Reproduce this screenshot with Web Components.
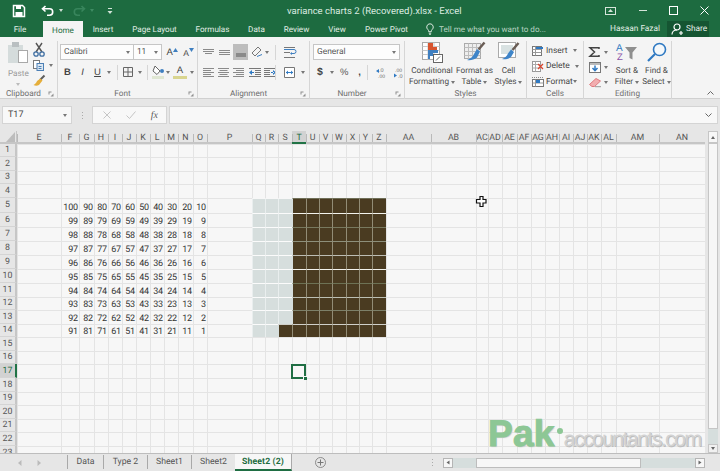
<!DOCTYPE html>
<html><head><meta charset="utf-8"><title>Excel</title>
<style>
html,body{margin:0;padding:0;background:#e6e6e6}
body{font-family:Roboto,"Liberation Sans",sans-serif;font-size:8.6px;color:#444;text-rendering:geometricPrecision}
</style></head>
<body>
<xl-app>
  <xl-titlebar slot="top"></xl-titlebar>
  <xl-ribbon slot="top"></xl-ribbon>
  <xl-formula slot="top"></xl-formula>
  <xl-main></xl-main>
  <xl-bottom></xl-bottom>
</xl-app>
<script>
const bar=(x,y,w,h,f)=>`<rect x="${x}" y="${y}" width="${w}" height="${h}" fill="${f}"/>`;
const lines=(arr,c='#8a8a8a')=>arr.map(([x,y,w])=>bar(x,y,w,1,c)).join('');
const ICONS={
 save:[14,14,`<path d="M1.5 1.5h9l2 2v9h-11z" fill="none" stroke="#fff" stroke-width="1.5"/>${bar(4,2,5,3,'#fff')}${bar(3.5,8,7,4,'#fff')}`],
 undo:[14,11,`<path d="M4.5 1 1.5 3.8 4.5 6.5M2 3.8h6.5a3.2 3.2 0 0 1 0 6.4H6" fill="none" stroke="#fff" stroke-width="1.6"/>`],
 redo:[14,11,`<path d="M9.5 1 12.5 3.8 9.5 6.5M12 3.8H5.5a3.2 3.2 0 0 0 0 6.4H8" fill="none" stroke="#3f8c63" stroke-width="1.6"/>`],
 cust:[6,8,`${bar(1,1,4,1,'#d5e5da')}<path d="M0.5 4h5L3 7z" fill="#d5e5da"/>`],
 ropt:[11,8,`<rect x=".5" y=".5" width="10" height="7" fill="none" stroke="#d5e5da"/><path d="M5.5 2 8 5H3z" fill="#d5e5da"/>`],
 min:[8,2,`${bar(0,0,8,1,'#d5e5da')}`],
 max:[9,9,`<rect x=".5" y=".5" width="8" height="8" fill="none" stroke="#fff"/>`],
 close:[9,9,`<path d="M.5.5l8 8M8.5.5l-8 8" stroke="#fff" fill="none"/>`],
 bulb:[8,12,`<path d="M4 .8a3.3 3.3 0 0 0-2 5.9c.6.6.7 1.2.7 2h2.6c0-.8.1-1.4.7-2A3.3 3.3 0 0 0 4 .8zM2.8 10.2h2.4M3.2 11.4h1.6" fill="none" stroke="#d9e8de"/>`],
 person:[12,12,`<circle cx="6" cy="4" r="3" fill="none" stroke="#fff" stroke-width="1.2"/><path d="M1 11.5c0-3 2-4.5 5-4.5M8 10h4M10 8v4" fill="none" stroke="#fff" stroke-width="1.2"/>`],
 paste:[21,21,`${bar(0,3,15,18,'#d5dcdc')}${bar(4,0,7,5,'#b9bfc1')}<rect x="10.5" y="8.5" width="9" height="12" fill="#fff" stroke="#a8a8a8"/>`],
 scis:[12,14,`<path d="M3 0l6 9M9 0L3 9" stroke="#555" stroke-width="1.4" fill="none"/><circle cx="3" cy="11" r="2.2" fill="none" stroke="#3f6fa3" stroke-width="1.3"/><circle cx="9" cy="11" r="2.2" fill="none" stroke="#3f6fa3" stroke-width="1.3"/>`],
 copy:[11,11,`<rect x=".5" y=".5" width="6" height="8" fill="#fff" stroke="#7a7a7a"/><rect x="4" y="3.5" width="6.5" height="7" fill="#dbe7f2" stroke="#4b7fb5"/>${bar(5.5,6,3,1,'#4b7fb5')}${bar(5.5,8,3,1,'#4b7fb5')}`],
 brush:[12,11,`<path d="M11.5.5 7 5" stroke="#5c5c5c" stroke-width="2"/><path d="M7.5 3.5l2 2-3.5 4.5c-1.7 1-3.8 1-5.5 0 1.7-.6 3-2.5 3.5-4z" fill="#e5ae3a"/>`],
 launch:[6,6,`<path d="M.5.5h3v1h-2v2h-1zM5.5 5.5H2.5L5.5 2.5z" fill="#8f8f8f"/>`],
 grow:[5,4,`<path d="M2.5 0 5 4H0z" fill="#3f7fc0"/>`],
 shrink:[5,4,`<path d="M2.5 4 5 0H0z" fill="#3f7fc0"/>`],
 borders:[10,10,`<path d="M.5.5h9v9h-9zM5 .5v9M.5 5h9" fill="none" stroke="#666"/>`],
 fill:[13,14,`<path d="M3 1l5 5-3 3.5L1 6z" fill="#fff" stroke="#666"/><circle cx="10" cy="6" r="2" fill="#3f7fc0"/>${bar(0,11,12,3,'#dfe6d2')}`],
 atop:[12,7,lines([[0,0,11],[0,2,11],[2,4,7]])],
 amid:[12,7,lines([[0,1,11],[0,3,11],[0,5,11]])],
 orient:[12,12,`<path d="M1 7l6-6 3 3-6 6z" fill="none" stroke="#777"/><path d="M6 10.5l5-2" stroke="#3f7fc0"/>`],
 wrap:[12,11,`${lines([[0,0,11],[0,5,6],[0,10,11]],'#777')}<path d="M0 2.5h10a1.5 1.5 0 0 1 0 4H7" fill="none" stroke="#3f7fc0"/><path d="M8 5v3L6 6.500z" fill="#3f7fc0"/>`],
 al:[11,9,lines([[0,0,11],[0,2,8],[0,4,11],[0,6,8],[0,8,11]])],
 ac:[11,9,lines([[0,0,11],[1.500,2,8],[0,4,11],[1.500,6,8],[0,8,11]])],
 ar:[11,9,lines([[0,0,11],[3,2,8],[0,4,11],[3,6,8],[0,8,11]])],
 indl:[12,9,`${lines([[0,0,12],[6,2,6],[6,4,6],[6,6,6],[0,8,12]],'#777')}<path d="M0 4.500l3-2.500v5zM2 4h3v1H2z" fill="#2f79c2"/>`],
 indr:[12,9,`${lines([[0,0,12],[0,2,6],[0,4,6],[0,6,6],[0,8,12]],'#777')}<path d="M12 4.500l-3-2.500v5zM7 4h3v1H7z" fill="#2f79c2"/>`],
 merge:[11,11,`<path d="M.5.5h10v10H.5z" fill="#fff" stroke="#777"/><path d="M2 5.500h7" stroke="#2f79c2"/><path d="M2 5.500l2-2v4zM9 5.500l-2-2v4z" fill="#2f79c2"/>`],
 inc:[11,11,`<text x="3" y="5" font-size="5.500" fill="#666" font-family="Liberation Sans">.0</text><text x="2" y="10.500" font-size="5" fill="#666" font-family="Liberation Sans">.00</text><path d="M0 4l3-2v4z" fill="#2f79c2"/>`],
 dec:[11,11,`<text x="2" y="5" font-size="5" fill="#666" font-family="Liberation Sans">.00</text><text x="5" y="10.500" font-size="5.500" fill="#666" font-family="Liberation Sans">.0</text><path d="M4 8.500l-3-2v4z" fill="#2f79c2"/>`],
 cond:[21,21,`<rect x=".5" y=".5" width="17" height="17" fill="#fff" stroke="#a9a9a9"/><path d="M6 .5v17M12 .5v17M.5 4.500h17M.5 8.500h17M.5 12.500h17" stroke="#c9c9c9"/>${bar(6,1,5,4,'#d8552f')}${bar(6,5,9,3,'#d8552f')}${bar(6,8,10,3,'#3f7fc0')}${bar(6,11,5,3,'#3f7fc0')}${bar(6,14,2,3,'#3f7fc0')}<rect x="11.500" y="12.500" width="9" height="8" fill="#fff" stroke="#666"/><path d="M14 18.500l4-4" stroke="#666"/>`],
 table:[21,20,`<rect x=".5" y="1.500" width="16" height="15" fill="#eee" stroke="#aaa"/><path d="M4.500 1.500v15M8.500 1.500v15M12.500 1.500v15M.5 5.500h16M.5 9.500h16M.5 13.500h16" stroke="#bdbdbd"/><path d="M20.500.5l-6 7" stroke="#6a5d55" stroke-width="2.500"/><path d="M13 7l3 2.500-3 6c-3 2.500-7 3-10 2.500 3-1 6-3 7-6z" fill="#3f85c9"/>`],
 cstyle:[21,20,`<rect x=".5" y=".5" width="17" height="15" fill="#fff" stroke="#aaa"/><rect x="3" y="3" width="12" height="9" fill="#d9e2e2"/><path d="M20.500 1l-6 7" stroke="#6a5d55" stroke-width="2.500"/><path d="M13 7.500l3 2.500-3 5c-2.500 2-6 2.500-9 2 3-1 5-3 6-5.500z" fill="#3f85c9"/>`],
 cins:[12,10,`<rect x=".5" y=".5" width="9" height="9" fill="#fff" stroke="#777"/><path d="M.5 3.500h9M.5 6.500h9M3.500.5v9" stroke="#999"/>${bar(4,1,7,2,'#2f79c2')}`],
 cdel:[12,11,`<rect x=".5" y=".5" width="8" height="10" fill="#fff" stroke="#999"/><path d="M.5 3.500h8M.5 7h8M3.500.5v10" stroke="#aaa"/><path d="M6 3l5 5M11 3l-5 5" stroke="#d8452f" stroke-width="1.300"/>`],
 cfmt:[12,10,`<path d="M0 .5h12" stroke="#888" stroke-dasharray="1 1"/><rect x=".5" y="2.500" width="11" height="7" fill="#fff" stroke="#777"/><path d="M3.500 2.500v7M.5 6h11" stroke="#999"/>${bar(4,3,4,3,'#2f79c2')}`],
 sum:[11,10,`<path d="M10 2V.8H1l4.500 4.200L1 9.200h9V8" fill="none" stroke="#444" stroke-width="1.500"/>`],
 fdown:[12,11,`<rect x=".5" y=".5" width="11" height="10" fill="#fff" stroke="#777"/>${bar(1,1,10,2,'#bbb')}<path d="M6 3.500v5M3.500 6 6 8.700 8.500 6" fill="none" stroke="#2f79c2" stroke-width="1.500"/>`],
 eraser:[12,9,`<path d="M7 .5l4.500 2.500-6 5.500H3L.5 6.500z" fill="#f2aeb0" stroke="#e07b80"/><path d="M6 8.700h6" stroke="#999"/>`],
 sort:[22,20,`<text x="0" y="8.500" font-size="10" fill="#2f79c2" font-family="Liberation Sans">A</text><text x="1" y="18" font-size="9.500" fill="#8a52a8" font-family="Liberation Sans">Z</text><path d="M9 5h12l-4.500 5.500v7l-3-1.500v-5.500z" fill="#8f8f8f"/>`],
 find:[20,20,`<circle cx="12.500" cy="7.500" r="6" fill="#f4f8fb" stroke="#2f79c2" stroke-width="1.600"/><path d="M8 12l-7 7" stroke="#2f79c2" stroke-width="2.200"/>`],
 cancel:[8,8,`<path d="M.5.5l7 7M7.500.5l-7 7" stroke="#c5c5c5" fill="none"/>`],
 check:[10,8,`<path d="M.5 4.500l3 3L9.500.5" stroke="#c5c5c5" fill="none"/>`],
 collapse:[7,4,`<path d="M.5 3.500l3-3 3 3" stroke="#666" fill="none"/>`],
 corner:[9,10,`<path d="M9 0v10H0z" fill="#bdbdbd"/>`],
 plus:[11,11,`<circle cx="5.500" cy="5.500" r="5" fill="none" stroke="#8b8b8b"/><path d="M5.500 2.500v6M2.500 5.500h6" stroke="#777"/>`],
 tl:[4,6,`<path d="M3.500 0v6L0 3z" fill="#bbb"/>`],
 tr:[4,6,`<path d="M.5 0v6L4 3z" fill="#bbb"/>`],
 ptr:[11,11,`<path d="M4 .5h3v3h3v3.500H7v3.500H4V7H.5V3.500H4z" fill="#fff" stroke="#111" stroke-width="1.200"/>`]
};
class XlIcon extends HTMLElement{
 constructor(){super();this.attachShadow({mode:'open'});}
 connectedCallback(){
  const [w,h,s]=ICONS[this.getAttribute('n')];
  this.shadowRoot.innerHTML=`<style>:host{display:inline-flex;flex:none;width:${w}px;height:${h}px}svg{display:block;overflow:visible}</style><svg width="${w}" height="${h}" viewBox="0 0 ${w} ${h}" xmlns="http://www.w3.org/2000/svg">${s}</svg>`;
 }
}
customElements.define('xl-icon',XlIcon);
class XlCaret extends HTMLElement{
 constructor(){super();const r=this.attachShadow({mode:'open'});
  r.innerHTML=`<style>:host{display:inline-block;flex:none;width:0;height:0;border-left:2.500px solid transparent;border-right:2.500px solid transparent;border-top:3px solid var(--caret,#777)}</style>`;}
}
customElements.define('xl-caret',XlCaret);

class XlApp extends HTMLElement{
 constructor(){super();this.attachShadow({mode:'open'}).innerHTML=`<style>
 :host{display:flex;flex-direction:column;width:720px;height:471px;overflow:hidden;background:#e6e6e6}
 </style><slot name="top"></slot><slot></slot>`;}
}
customElements.define('xl-app',XlApp);

class XlTitlebar extends HTMLElement{
 constructor(){super();this.attachShadow({mode:'open'}).innerHTML=`<style>
 :host{display:block;height:37px;background:#1d6b40;color:#fff;font:8.100px Roboto,sans-serif}
 .r1{display:grid;grid-template-columns:287px 144px minmax(0,1fr);height:21px;align-items:center}
 .l{display:flex;align-items:center;padding-left:12px;--caret:#cfe0d5}
 .title{color:#dcebe1;font-size:9.500px;padding-top:1px;white-space:nowrap}
 .w{display:flex;align-items:center;justify-content:flex-end}
 .w span{display:flex;width:30px;justify-content:center}
 .r2{display:flex;height:16px;align-items:stretch}
 .t{display:flex;align-items:center;justify-content:center;color:#e3efe7}
 .t.a{background:#f4f4f4;color:#1d6b40;margin-left:3px;width:40px;padding-top:1px}
 .tell{display:flex;align-items:center;gap:5px;color:#b9d4c3;padding-left:8px;flex:1}
 .u{display:flex;align-items:center;color:#e3efe7;margin-right:7px;font-size:8.300px}
 .sh{display:flex;align-items:center;width:42px;margin-right:11px;background:#155532;gap:3px;padding-left:4px;box-sizing:border-box;color:#e9f2ec;font-size:8.300px}
 </style>
 <div class="r1">
  <div class="l"><xl-icon n="save"></xl-icon><xl-icon n="undo" style="margin-left:15px"></xl-icon><xl-caret style="margin-left:4px"></xl-caret>
   <xl-icon n="redo" style="margin-left:9px;opacity:.8"></xl-icon><xl-caret style="margin-left:4px;--caret:#3f8c63"></xl-caret><xl-icon n="cust" style="margin-left:13px"></xl-icon></div>
  <div class="title">variance charts 2 (Recovered).xlsx - Excel</div>
  <div class="w"><span style="width:36px"><xl-icon n="ropt"></xl-icon></span><span><xl-icon n="min"></xl-icon></span><span><xl-icon n="max"></xl-icon></span><span style="width:32px"><xl-icon n="close"></xl-icon></span></div>
 </div>
 <div class="r2">
  <div class="t" style="width:40px">File</div><div class="t a">Home</div>
  <div class="t" style="width:40px">Insert</div><div class="t" style="width:63px">Page Layout</div>
  <div class="t" style="width:53px">Formulas</div><div class="t" style="width:35px">Data</div>
  <div class="t" style="width:45px">Review</div><div class="t" style="width:36px">View</div>
  <div class="t" style="width:63px">Power Pivot</div>
  <div class="tell"><xl-icon n="bulb"></xl-icon>Tell me what you want to do...</div>
  <div class="u">Hasaan Fazal</div>
  <div class="sh"><xl-icon n="person"></xl-icon>Share</div>
 </div>`;}
}
customElements.define('xl-titlebar',XlTitlebar);

class XlGroup extends HTMLElement{
 constructor(){super();this.attachShadow({mode:'open'});}
 connectedCallback(){
  const l=this.getAttribute('label'),ln=this.hasAttribute('launch');
  this.shadowRoot.innerHTML=`<style>
  :host{display:flex;flex-direction:column;flex:none;box-sizing:border-box;height:58px;border-right:1px solid #d6d6d6}
  .b{flex:1;min-height:0}
  .f{display:grid;grid-template-columns:1fr auto 1fr;height:11px;align-items:center;color:#6d6d6d;font-size:8.200px;${ln?'padding-right:10px;':''}}
  .f i{grid-column:3;justify-self:end;display:flex;margin-right:-7px}
  .f span{grid-column:2;grid-row:1}
  </style><div class="b"><slot></slot></div><div class="f"><span>${l}</span>${ln?'<i><xl-icon n="launch"></xl-icon></i>':''}</div>`;
 }
}
customElements.define('xl-group',XlGroup);

const ic=(n,st='')=>`<xl-icon n="${n}" style="${st}"></xl-icon>`;
const car=(st='')=>`<xl-caret style="${st}"></xl-caret>`;
const big=(w,icon,t1,t2)=>`<div class="big" style="width:${w}px"><div class="bi">${ic(icon)}</div><div>${t1}</div><div class="c">${t2}${car('margin-left:2px')}</div></div>`;
class XlRibbon extends HTMLElement{
 constructor(){super();this.attachShadow({mode:'open'}).innerHTML=`<style>
 :host{display:flex;box-sizing:border-box;height:62px;padding-top:4px;background:#f4f4f4;border-bottom:1px solid #d0d0d0;color:#444;font:8.200px Roboto,sans-serif;position:relative}
 .r{display:flex;align-items:center;height:16px}
 .sel{display:flex;align-items:center;box-sizing:border-box;height:16px;background:#fdfdfd;border:1px solid #c6c6c6;font-size:8.400px;padding:0 3px;justify-content:space-between;color:#555}
 .sep{width:1px;height:15px;background:#d6d6d6;flex:none}
 .k{display:flex;align-items:center;justify-content:center;flex:none}
 .big{display:flex;flex-direction:column;align-items:center;flex:none;line-height:11px;color:#4a4a4a;white-space:nowrap}
 .bi{height:24px;display:flex;align-items:flex-start}
 .c{display:flex;align-items:center}
 .col{display:flex}
 b,em,u{font-family:"Liberation Sans",sans-serif;font-size:9.500px;color:#444}
 .A{font:9.500px "Liberation Sans",sans-serif;display:flex;align-items:flex-start;gap:0}
 .cellrow{display:flex;align-items:center;height:15.500px;font-size:8.400px;padding-left:5px}
 .coll{position:absolute;right:6px;bottom:3px;display:flex}
 </style>
 <xl-group label="Clipboard" launch style="width:58px">
  <div class="col" style="padding-left:8px">
   <div style="width:26px;color:#999;margin-top:1px">${ic('paste')}<div style="margin-top:3px;line-height:10px;">Paste</div><div style="padding-left:8px;--caret:#bbb">${car()}</div></div>
   <div style="padding-top:1px"><div class="k" style="height:16px;width:12px;margin-left:-1px">${ic('scis')}</div><div class="r" style="height:15px;margin-left:-1px">${ic('copy')}${car('margin-left:5px')}</div><div class="k" style="height:15px;width:12px;margin-left:-1px">${ic('brush')}</div></div>
  </div>
 </xl-group>
 <xl-group label="Font" launch style="width:140px">
  <div style="padding:3px 0 0 2px">
   <div class="r"><div class="sel" style="width:75px">Calibri${car()}</div><div class="sel" style="width:29px;margin-left:-1px">11${car()}</div>
    <div class="A" style="margin-left:5px;width:17px">A${ic('grow','margin-top:1px')}</div><div class="A" style="width:14px;font-size:8.500px;padding-top:1px">A${ic('shrink')}</div></div>
   <div class="r" style="margin-top:4px">
    <div class="k" style="width:15px;margin-left:0"><b>B</b></div><div class="k" style="width:15px"><em>I</em></div><div class="k" style="width:15px"><u>U</u></div>${car('margin-left:2px')}
    <div class="sep" style="margin-left:6px"></div><div class="k" style="width:20px">${ic('borders')}</div>${car()}
    <div class="sep" style="margin-left:5px"></div>${ic('fill','margin-left:4px')}${car('margin-left:1px')}
    <div class="k" style="width:14px;margin-left:3px;display:block;text-align:center;font-size:9.500px;line-height:10px;font-family:'Liberation Sans';border-bottom:3px solid #d9d58f">A</div>${car('margin-left:3px')}
   </div>
  </div>
 </xl-group>
 <xl-group label="Alignment" launch style="width:112px">
  <div style="padding:3px 0 0 5px">
   <div class="r">${ic('atop')}${ic('amid','margin-left:4px')}<div class="k" style="width:15px;height:16px;background:#bdbdbd;margin-left:2px;align-items:flex-end;padding-bottom:3px;box-sizing:border-box"><div style="width:10px;height:4px;background:#8a8a8a"></div></div>${ic('orient','margin-left:3px')}${car('margin-left:2px')}<div class="sep" style="margin-left:6px"></div>${ic('wrap','margin-left:8px')}</div>
   <div class="r" style="margin-top:4px">${ic('al')}${ic('ac','margin-left:4px')}${ic('ar','margin-left:4px')}${ic('indl','margin-left:5px')}${ic('indr','margin-left:3px')}<div class="sep" style="margin-left:-1px"></div>${ic('merge','margin-left:8px')}${car('margin-left:6px')}</div>
  </div>
 </xl-group>
 <xl-group label="Number" launch style="width:95px">
  <div style="padding:3px 0 0 3px">
   <div class="r"><div class="sel" style="width:87px;justify-content:space-between">General${car()}</div></div>
   <div class="r" style="margin-top:4px;padding-left:4px;font-family:'Liberation Sans';font-size:10px;color:#555"><b style="font-size:10.500px;width:9px">$</b>${car('margin-left:5px')}<span style="margin-left:6px;font-size:9.500px;width:14px">%</span><b style="margin-left:6px;width:10px">,</b><div class="sep" style="margin-right:8px"></div>${ic('inc')}${ic('dec','margin-left:6px')}</div>
  </div>
 </xl-group>
 <xl-group label="Styles" style="width:122px">
  <div class="col" style="padding-left:3px;padding-top:1px">${big(48,'cond','Conditional','Formatting')}${big(37,'table','Format as','Table')}${big(31,'cstyle','Cell','Styles')}</div>
 </xl-group>
 <xl-group label="Cells" style="width:57px">
  <div style="padding-top:2px">
   <div class="cellrow">${ic('cins')}<span style="margin-left:2px;width:27px">Insert</span>${car()}</div>
   <div class="cellrow">${ic('cdel')}<span style="margin-left:2px;width:27px">Delete</span>${car('margin-left:2px')}</div>
   <div class="cellrow">${ic('cfmt')}<span style="margin-left:2px;width:27px">Format</span>${car()}</div>
  </div>
 </xl-group>
 <xl-group label="Editing" style="width:88px">
  <div class="col">
   <div style="padding:3px 0 0 5px;width:24px;--caret:#777"><div class="r" style="height:16px">${ic('sum')}${car('margin-left:4px')}</div><div class="r" style="height:15px">${ic('fdown')}${car('margin-left:3px')}</div><div class="r" style="height:15px">${ic('eraser')}${car('margin-left:3px')}</div></div>
   <div class="col" style="padding-top:1px;margin-left:-1px">${big(30,'sort','Sort &amp;','Filter')}${big(29,'find','Find &amp;','Select')}</div>
  </div>
 </xl-group>
 <div class="coll">${ic('collapse')}</div>`;}
}
customElements.define('xl-ribbon',XlRibbon);

class XlFormula extends HTMLElement{
 constructor(){super();this.attachShadow({mode:'open'}).innerHTML=`<style>
 :host{display:flex;box-sizing:border-box;height:32px;padding:7px 2px 7px 2px;background:#e6e6e6;font:9px Roboto,sans-serif;color:#444;--caret:#777}
 .b{display:flex;align-items:center;box-sizing:border-box;background:#f8f8f8;border:1px solid #d4d4d4;height:18px}
 .n{width:70px;justify-content:space-between;padding:0 4px 0 5px}
 .d{width:20px;display:flex;flex-direction:column;gap:2px;align-items:center;justify-content:center}
 .d i{width:1px;height:1px;background:#aaa}
 .m{width:75px;justify-content:space-between;padding:0 8px 0 10px}
 .m em{font:italic 10px "Liberation Serif",serif;color:#555}
 .x{flex:1;margin-left:2px;justify-content:flex-end;padding-right:5px}
 </style>
 <div class="b n">T17<xl-caret></xl-caret></div><div class="d"><i></i><i></i><i></i></div>
 <div class="b m"><xl-icon n="cancel"></xl-icon><xl-icon n="check"></xl-icon><em>fx</em></div>
 <div class="b x"><xl-icon n="collapse" style="transform:rotate(180deg)"></xl-icon></div>`;}
}
customElements.define('xl-formula',XlFormula);

const EDGES=[0,17,61,79,94,108,122,136,150,164,178,193,207,252,265,278,292,306,319,332,346,359,372,386,431,476,488,502,517,531,545,559,573,587,601,616,659,705];
const YEDGES=[144,157,171,184,198,213,227,241,255,269,283,297,310,324,337,351,364,378,392,405,419,432,446,460];
const COLS=[..."EFGHIJKLMNOPQRSTUVWXYZ",...'AA AB AC AD AE AF AG AH AI AJ AK AL AM AN'.split(' ')];
const HLINE={6:'#f4f4ee',7:'#78795f',8:'#8d8f7b',9:'#bdbdb4',10:'#f2f2ec',11:'#6d7255',12:'#bcbfb4',13:'#7d8069',14:'#d0d0ca'};
class XlSheet extends HTMLElement{
 constructor(){super();
  const cw=EDGES.slice(1).map((e,i)=>(e-EDGES[i])+'px').join(' ');
  const rh=YEDGES.slice(1).map((e,i)=>(e-YEDGES[i])+'px').join(' ');
  let h=`<div class="hc corner"><xl-icon n="corner"></xl-icon></div>`;
  COLS.forEach(c=>h+=`<div class="hc col${c==='T'?' on':''}">${c}</div>`);
  for(let r=1;r<=23;r++){
   h+=`<div class="hc row${r===17?' on':''}">${r}</div>`;
   COLS.forEach((c,i)=>{
    let cls='c',txt='',st='';
    const n=c.length===1?c.charCodeAt(0)-69:-1; // E=0
    if(r>=5&&r<=14){
     if(n>=1&&n<=10){txt=(11-n)*10-(r-5);}
     const dark=(n>=15&&n<=21)||(n===14&&r===14);
     const light=!dark&&n>=12&&n<=14;
     if(dark){cls+=' dk';st=`border-top-color:${r===5?'#6f6f58':HLINE[r]}`;if(n===14)st+=';border-left-color:#d6dedd';if(n===15&&r<14)st+=';border-left-color:#d6dedd';}
     if(light){cls+=' lt';st=r===5?'border-top-color:#f7f7f7':'';}
    }
    h+=`<div class="${cls}" style="${st}">${txt}</div>`;
   });
  }
  this.attachShadow({mode:'open'}).innerHTML=`<style>
  :host{display:block;position:relative;width:705px;height:322px;overflow:hidden;background:#f7f7f7;flex:none}
  .g{display:grid;grid-template-columns:${cw};grid-template-rows:13px ${rh};font:9px Roboto,"Liberation Sans",sans-serif;color:#333}
  .hc{display:flex;align-items:center;justify-content:center;background:#e6e6e6;color:#555;box-sizing:border-box;font-size:8.800px;overflow:hidden;white-space:nowrap}
  .corner{justify-content:flex-end;padding-right:1px;border-bottom:2px solid #c6c6c6;border-right:1px solid #c6c6c6;align-items:flex-end}
  .col{box-shadow:inset 0 -2px #c6c6c6;position:relative}
  .col::before{content:"";position:absolute;left:0;top:3px;bottom:2px;width:1px;background:#b9b9b9}
  .row{border-right:2px solid #c6c6c6;border-bottom:1px solid #d4d4d4}
  .on{background:#d2d2d2;color:#1d6b40}
  .col.on{box-shadow:inset 0 -2px #217346}
  .row.on{border-right-color:#217346}
  .c{box-sizing:border-box;display:flex;align-items:flex-end;justify-content:flex-end;border-left:1px solid #e4e4e4;border-top:1px solid #e4e4e4;line-height:10px;padding-right:1px;letter-spacing:-.15px;overflow:hidden;white-space:nowrap}
  .dk{background:#4a3b21;border-left-color:#928c76}
  .lt{background:#d6dedd;border-left-color:#e9eeee;border-top-color:#fbfbfb}
  .sel{position:absolute;left:291px;top:233px;border:2px solid #1f6e43;box-sizing:content-box;width:11px;height:11px}
  .sel i{position:absolute;right:-3px;bottom:-3px;background:#1f6e43;border:1px solid #f7f7f7;border-width:1px 0 0 1px;box-sizing:content-box;width:3px;height:3px}
  .ptr{position:absolute;left:476px;top:65px;display:flex}
  </style><div class="g">${h}</div>
  <div class="sel"><i></i></div>
  <div class="ptr"><xl-icon n="ptr"></xl-icon></div>
  <xl-watermark></xl-watermark>`;}
}
customElements.define('xl-sheet',XlSheet);

class XlWatermark extends HTMLElement{
 constructor(){super();this.attachShadow({mode:'open'}).innerHTML=`<style>
 :host{position:absolute;left:488px;top:285px;display:flex;align-items:baseline;font-family:"Liberation Sans",sans-serif;line-height:36px;white-space:nowrap;height:36px}
 .p{font-size:37px;font-weight:bold;color:#8dc795;-webkit-text-stroke:1px #8dc795;text-shadow:1px 1px 1px #c8c8c8;letter-spacing:.2px}
 .d{width:6px;height:6px;border-radius:50%;background:#8dc795;margin:0 0 0 3px;align-self:flex-start;margin-top:12px;flex:none}
 .a{font-size:21.500px;letter-spacing:-1.700px;color:#d2d2d2;text-shadow:1px 1px 0 #bdbdbd}
 </style><span class="p">Pak</span><span class="d"></span><span class="a">accountants.com</span>`;}
}
customElements.define('xl-watermark',XlWatermark);

class XlVScroll extends HTMLElement{
 constructor(){super();this.attachShadow({mode:'open'}).innerHTML=`<style>
 :host{display:flex;flex-direction:column;width:10px;flex:none;margin-left:3px;background:#d6dedd;--caret:#666}
 .b{height:12px;background:#f7f7f7;border:1px solid #c6c6c6;box-sizing:border-box;display:flex;align-items:center;justify-content:center;flex:none}
 .t{height:286px;background:#f7f7f7;border:1px solid #c6c6c6;box-sizing:border-box;flex:none;margin-top:0}
 .s{flex:1}
 </style><div class="b"><xl-caret style="transform:rotate(180deg)"></xl-caret></div><div class="t"></div><div class="s"></div><div class="b" style="height:9px;background:#f0f0f0"><xl-caret></xl-caret></div>`;}
}
customElements.define('xl-vscroll',XlVScroll);

class XlMain extends HTMLElement{
 constructor(){super();this.attachShadow({mode:'open'}).innerHTML=`<style>
 :host{display:flex;height:322px;flex:none;background:#e6e6e6}
 </style><xl-sheet></xl-sheet><xl-vscroll></xl-vscroll>`;}
}
customElements.define('xl-main',XlMain);

class XlBottom extends HTMLElement{
 constructor(){super();this.attachShadow({mode:'open'}).innerHTML=`<style>
 :host{display:flex;height:18px;flex:none;background:#e6e6e6;border-top:1px solid #bdbdbd;box-sizing:border-box;font:8.700px Roboto,sans-serif;color:#555;align-items:stretch}
 .nav{display:flex;width:67px;align-items:center;box-sizing:border-box;padding-left:18px;gap:15px}
 .tab{display:flex;align-items:center;justify-content:center;box-sizing:border-box;border-left:1px solid #a9a9a9;margin:1px 0 2px}
 .tab.a{border-left:0;margin:0;background:#f7f7f7;color:#1d6b40;font-weight:700;border-bottom:2px solid #1f6e43;border-right:1px solid #a9a9a9;letter-spacing:.1px}
 .pl{display:flex;align-items:center;width:140px;padding-left:23px;box-sizing:border-box}
 .dots{display:flex;flex-direction:column;gap:2px;width:11px;justify-content:center;align-items:flex-start}
 .dots i{width:1px;height:1px;background:#aaa}
 .hs{display:flex;width:262px;height:10px;align-self:center;background:#d6dedd;--caret:#666}
 .hb{width:10px;background:#f7f7f7;border:1px solid #b5b5b5;box-sizing:border-box;flex:none;display:flex;align-items:center;justify-content:center}
 .th{width:165px;margin-left:23px;background:#f7f7f7;border:1px solid #bdbdbd;box-sizing:border-box}
 </style>
 <div class="nav"><xl-icon n="tl"></xl-icon><xl-icon n="tr"></xl-icon></div>
 <div class="tab" style="width:36px">Data</div><div class="tab" style="width:44px">Type 2</div><div class="tab" style="width:44px">Sheet1</div><div class="tab" style="width:44px">Sheet2</div>
 <div class="tab a" style="width:57px">Sheet2 (2)</div>
 <div class="pl"><xl-icon n="plus"></xl-icon></div>
 <div class="dots"><i></i><i></i><i></i></div>
 <div class="hs"><div class="hb"><xl-caret style="transform:rotate(90deg)"></xl-caret></div><div class="th"></div><div style="flex:1"></div><div class="hb"><xl-caret style="transform:rotate(-90deg)"></xl-caret></div></div>`;}
}
customElements.define('xl-bottom',XlBottom);
</script>
</body></html>
